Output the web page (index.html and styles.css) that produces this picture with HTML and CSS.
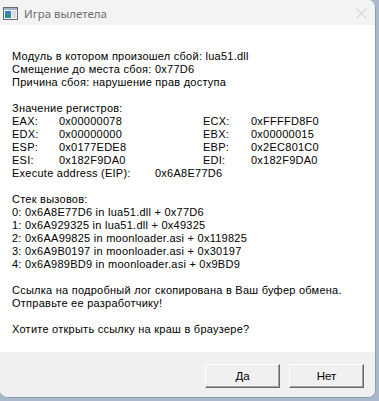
FILE: index.html
```html
<!DOCTYPE html>
<html lang="ru">
<head>
  <meta charset="UTF-8" />
  <title>Игра вылетела</title>
  <link rel="stylesheet" href="styles.css">
</head>
<body>

<div class="window">
  <div class="titlebar">
    <svg class="app-icon" width="15" height="13" viewBox="0 0 15 13">
      <rect x="0.5" y="0.5" width="14" height="12" fill="#f4f4f4" stroke="#6b6b6b"/>
      <rect x="1" y="1" width="13" height="2" fill="#9fb4c8"/>
      <rect x="2" y="4" width="6" height="7" fill="#2f8f8a"/>
      <rect x="2" y="4" width="6" height="3" fill="#3a7fc0"/>
      <rect x="9" y="4" width="4" height="7" fill="#dcdcdc"/>
    </svg>
    <span class="title">Игра вылетела</span>
    <svg class="close" width="11" height="11" viewBox="0 0 11 11">
      <path d="M0.5 0.5 L10.5 10.5 M10.5 0.5 L0.5 10.5" stroke="#c8c8c8" stroke-width="1"/>
    </svg>
  </div>

  <div class="content">
    <div class="block">
      Модуль в котором произошел сбой: lua51.dll<br>
      Смещение до места сбоя: 0x77D6<br>
      Причина сбоя: нарушение прав доступа
    </div>

    <div class="block">
      Значение регистров:
      <div class="regs">
        <span>EAX:</span><span>0x00000078</span><span>ECX:</span><span>0xFFFFD8F0</span>
        <span>EDX:</span><span>0x00000000</span><span>EBX:</span><span>0x00000015</span>
        <span>ESP:</span><span>0x0177EDE8</span><span>EBP:</span><span>0x2EC801C0</span>
        <span>ESI:</span><span>0x182F9DA0</span><span>EDI:</span><span>0x182F9DA0</span>
      </div>
      <div class="eip"><span>Execute address (EIP):</span><span>0x6A8E77D6</span></div>
    </div>

    <div class="block">
      Стек вызовов:<br>
      0: 0x6A8E77D6 in lua51.dll + 0x77D6<br>
      1: 0x6A929325 in lua51.dll + 0x49325<br>
      2: 0x6AA99825 in moonloader.asi + 0x119825<br>
      3: 0x6A9B0197 in moonloader.asi + 0x30197<br>
      4: 0x6A989BD9 in moonloader.asi + 0x9BD9
    </div>

    <div class="block">
      Ссылка на подробный лог скопирована в Ваш буфер обмена.<br>
      Отправьте ее разработчику!
    </div>

    <div class="block">
      Хотите открыть ссылку на краш в браузере?
    </div>
  </div>

  <div class="footer">
    <button class="btn">Да</button>
    <button class="btn">Нет</button>
  </div>
</div>

</body>
</html>
```

FILE: styles.css
```css
body {
  margin: 0;
  background-color: #a9b8cc;
  font-family: 'Liberation Sans', Arial, sans-serif;
}

.window {
  width: 376px;
  height: 398px;
  display: flex;
  flex-direction: column;
  background: #fff;
  border-right: 1px solid #8c9cb3;
  border-bottom: 1px solid #8c9cb3;
  border-radius: 0 8px 8px 8px;
  overflow: hidden;
  box-sizing: border-box;
}

.titlebar {
  height: 25px;
  flex: none;
  display: flex;
  align-items: center;
  padding: 0 0 0 3px;
  background-color: #f3f3f3;
}

.app-icon {
  margin-top: 2px;
}

.title {
  margin-left: 6px;
  font-family: 'Noto Sans', sans-serif;
  font-size: 11.5px;
  color: #6e6e6e;
  margin-top: 1px;
}

.close {
  margin-left: auto;
  margin-right: 8px;
  margin-top: 1px;
}

.content {
  flex: 1;
  padding: 25px 12px 0;
  font-size: 11px;
  line-height: 13px;
  letter-spacing: 0.25px;
  color: #000;
}

.block {
  margin-bottom: 13px;
}

.regs {
  display: grid;
  grid-template-columns: 47px 144px 48px auto;
}

.eip {
  display: grid;
  grid-template-columns: 143px auto;
}

.footer {
  height: 45px;
  flex: none;
  display: flex;
  justify-content: flex-end;
  align-items: flex-start;
  gap: 9px;
  padding: 12px 11px 0 0;
  background-color: #f0f0f0;
  box-sizing: border-box;
}

.btn {
  width: 75px;
  height: 24px;
  padding: 0;
  font-family: 'Liberation Sans', Arial, sans-serif;
  font-size: 11.5px;
  color: #000;
  background-color: #f0f0f0;
  border: 1px solid;
  border-color: #fff #696969 #696969 #fff;
  box-shadow: inset -1px -1px 0 #a0a0a0;
}
```
